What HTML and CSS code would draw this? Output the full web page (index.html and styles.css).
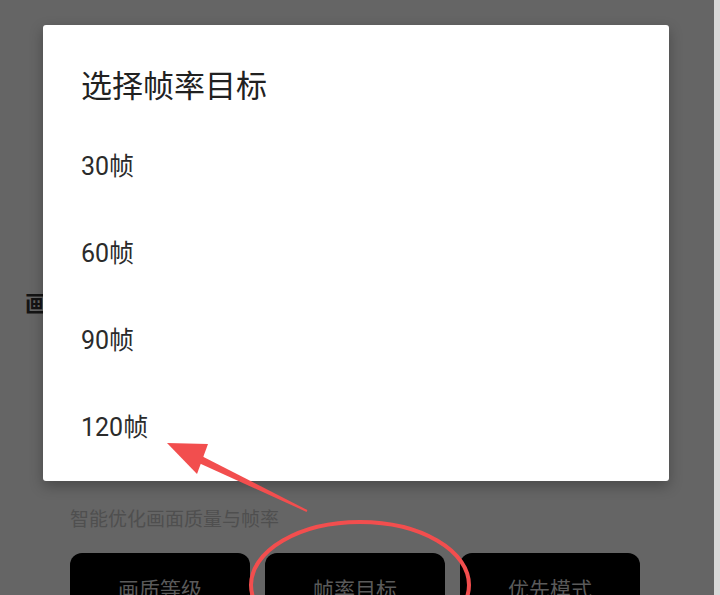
FILE: index.html
```html
<!DOCTYPE html>
<html lang="zh-CN">
<head>
<meta charset="utf-8">
<title>选择帧率目标</title>
<link rel="stylesheet" href="styles.css">
</head>
<body>
<div class="screen">
  <main class="page">
    <h2 class="heading">画面设置</h2>
    <section class="section">
      <p class="subtitle">智能优化画面质量与帧率</p>
      <div class="buttons">
        <div class="btn">画质等级</div>
        <div class="btn">帧率目标</div>
        <div class="btn">优先模式</div>
      </div>
    </section>

    <div class="dialog">
      <div class="dialog-title">选择帧率目标</div>
      <ul class="options">
        <li class="option">30帧</li>
        <li class="option">60帧</li>
        <li class="option">90帧</li>
        <li class="option">120帧</li>
      </ul>
    </div>

    <svg class="annotation" width="714" height="595" viewBox="0 0 714 595" aria-hidden="true">
      <polygon points="196.7,453.4 307.4,510.1 306.6,511.9 193.3,460.6" fill="#f24e4e"/>
      <polygon points="167,443 208,444 197,474" fill="#f24e4e"/>
      <ellipse cx="360" cy="585" rx="109" ry="63" fill="none" stroke="#f24e4e" stroke-width="4"/>
    </svg>
  </main>
  <div class="edge"></div>
</div>
</body>
</html>
```

FILE: styles.css
```css
* { box-sizing: border-box; }

html, body {
  margin: 0;
  padding: 0;
  width: 720px;
  height: 595px;
  overflow: hidden;
  background: #656565;
  font-family: Roboto, "Noto Sans CJK SC", sans-serif;
}

.screen {
  display: flex;
  width: 720px;
  height: 595px;
}

.page {
  position: relative;
  flex: 1;
  padding-left: 25px;
  overflow: hidden;
}

.edge {
  width: 6px;
  background: #d9d9d9;
}

.heading {
  margin: 288px 0 0;
  font-size: 23px;
  line-height: 28px;
  font-weight: bold;
  color: #141414;
  font-family: "Noto Sans CJK SC", sans-serif;
}

.section {
  padding-left: 45px;
  margin-top: 189px;
}

.subtitle {
  margin: 0;
  font-family: "Noto Sans CJK SC", sans-serif;
  font-size: 19px;
  line-height: 26px;
  color: #4f4f4f;
}

.buttons {
  display: flex;
  gap: 15px;
  margin-top: 22px;
}

.btn {
  width: 180px;
  height: 80px;
  background: #000;
  border-radius: 12px;
  color: #5a5a5a;
  font-family: "Noto Sans CJK SC", sans-serif;
  font-size: 21px;
  line-height: 30px;
  padding-top: 20px;
  text-align: center;
}

.dialog {
  position: absolute;
  left: 43px;
  top: 25px;
  width: 626px;
  height: 456px;
  background: #fff;
  border-radius: 3px;
  box-shadow: 0 5px 14px rgba(0, 0, 0, 0.28);
  padding: 39px 38px 0 38px;
}

.dialog-title {
  font-family: "Noto Sans CJK SC", sans-serif;
  font-size: 31px;
  line-height: 40px;
  color: #212121;
}

.options {
  list-style: none;
  margin: 16px 0 0;
  padding: 0;
}

.option {
  height: 87px;
  display: flex;
  align-items: center;
  font-size: 25px;
  color: #2b2b2b;
}

.annotation {
  position: absolute;
  left: 0;
  top: 0;
  pointer-events: none;
}
```
